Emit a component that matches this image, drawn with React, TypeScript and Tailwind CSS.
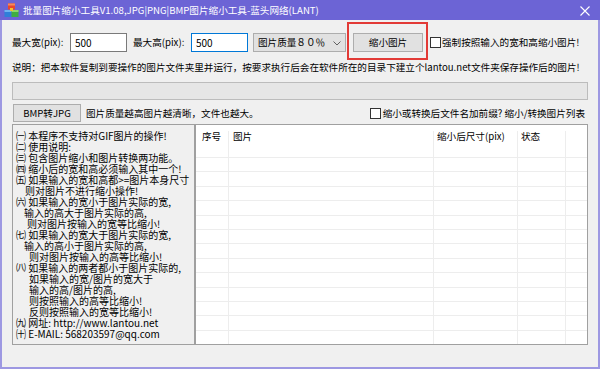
import React from "react";

const lines: [string, number][] = [
  ["㈠ 本程序不支持对GIF图片的操作!", 0],
  ["㈡ 使用说明:", 0],
  ["㈢ 包含图片缩小和图片转换两功能。", 0],
  ["㈣ 缩小后的宽和高必须输入其中一个!", 0],
  ["㈤ 如果输入的宽和高都>=图片本身尺寸", 0],
  ["则对图片不进行缩小操作!", 9],
  ["㈥ 如果输入的宽小于图片实际的宽,", 0],
  ["输入的高大于图片实际的高,", 8],
  ["则对图片按输入的宽等比缩小!", 11],
  ["㈦ 如果输入的宽大于图片实际的宽,", 0],
  ["输入的高小于图片实际的高,", 8],
  ["则对图片按输入的高等比缩小!", 13],
  ["㈧ 如果输入的两者都小于图片实际的,", 0],
  ["如果输入的宽/图片的宽大于", 13],
  ["输入的高/图片的高,", 13],
  ["则按照输入的高等比缩小!", 13],
  ["反则按照输入的宽等比缩小!", 13],
  ["㈨ 网址: http://www.lantou.net", 0],
  ["㈩ E-MAIL: 568203597@qq.com", 0],
];

function Cells({ header }: { header?: boolean }) {
  const base = "h-full border-r border-[#ededed] shrink-0";
  return (
    <>
      <div className={`${base} w-[33px] pl-[6px]`}>{header ? "序号" : ""}</div>
      <div className={`${base} w-[205px] pl-[4px]`}>{header ? "图片" : ""}</div>
      <div className={`${base} w-[84px] pl-[3px]`}>{header ? "缩小后尺寸(pix)" : ""}</div>
      <div className={`${base} w-[48px] pl-[3px]`}>{header ? "状态" : ""}</div>
      <div className="h-full flex-1" />
    </>
  );
}

export default function App() {
  return (
    <div className="w-[600px] h-[369px] flex flex-col overflow-hidden font-['Noto_Sans_CJK_SC',sans-serif] text-[9.6px] leading-[11px] text-black">
      {/* Title bar */}
      <div className="h-[20px] shrink-0 bg-[#6c64d5] flex items-center relative">
        <svg width="15" height="15" viewBox="0 0 15 15" className="ml-[4px]">
          <rect x="4" y="0.5" width="7" height="6" fill="#e8462f" />
          <rect x="4" y="0.5" width="7" height="2" fill="#f58a5a" />
          <rect x="0.5" y="7" width="7" height="7" fill="#2f7fd8" />
          <rect x="0.5" y="7" width="7" height="2" fill="#6fb2f0" />
          <rect x="7.5" y="7" width="7" height="7" fill="#3fae3f" />
          <rect x="7.5" y="7" width="7" height="2" fill="#8fd86a" />
          <rect x="6" y="5" width="3" height="3" fill="#f2c230" />
        </svg>
        <span className="ml-[4px] text-white whitespace-nowrap text-[9.6px]">
          批量图片缩小工具V1.08,JPG|PNG|BMP图片缩小工具-蓝头网络(LANT)
        </span>
        <svg width="10" height="10" viewBox="0 0 10 10" className="absolute right-[10px] top-[6px]">
          <path d="M0.5 0.5 L9.5 9.5 M9.5 0.5 L0.5 9.5" stroke="white" strokeWidth="1.1" />
        </svg>
      </div>

      {/* Body */}
      <div className="flex-1 flex flex-col bg-[#f0f0f0] border-x-2 border-b-2 border-[#9d98e2] pl-[10px] pr-[10px]">
        {/* Row 1 */}
        <div className="mt-[13px] h-[19px] flex items-center whitespace-nowrap">
          <div className="w-[58px]">最大宽(pix):</div>
          <div className="w-[57px] h-[19px] bg-white border border-[#7a7a7a] flex items-center pl-[4px] text-[10px]">500</div>
          <div className="ml-[6px] w-[58px]">最大高(pix):</div>
          <div className="w-[57px] h-[19px] bg-white border border-[#0078d7] flex items-center pl-[4px] text-[10px]">500</div>
          <div className="ml-[5px] w-[93px] h-[19px] bg-[#e1e1e1] border border-[#adadad] flex items-center pl-[4px] relative">
            <span>图片质量８０％</span>
            <svg width="8" height="5" viewBox="0 0 8 5" className="absolute right-[4px] top-[7px]">
              <path d="M0.5 0.5 L4 4 L7.5 0.5" stroke="#606060" fill="none" strokeWidth="1" />
            </svg>
          </div>
          <div className="ml-[7px] w-[70px] h-[19px] relative">
            <div className="w-full h-full bg-[#e1e1e1] border border-[#adadad] flex items-center justify-center">缩小图片</div>
            <div className="absolute left-[-6px] right-[-5px] top-[-11px] bottom-[-8px] border-2 border-[#e23a36]" />
          </div>
          <div className="ml-[7px] w-[11px] h-[11px] bg-white border border-[#333333]" />
          <div className="ml-[1px]">强制按照输入的宽和高缩小图片!</div>
        </div>

        {/* Row 2 */}
        <div className="mt-[9px] h-[12px] flex items-center whitespace-nowrap">
          说明：把本软件复制到要操作的图片文件夹里并运行，按要求执行后会在软件所在的目录下建立个lantou.net文件夹保存操作后的图片!
        </div>

        {/* Row 3 progress */}
        <div className="mt-[9px] h-[18px] bg-[#e6e6e6] border border-[#bcbcbc]" />

        {/* Row 4 */}
        <div className="mt-[4px] h-[18px] flex items-center whitespace-nowrap">
          <div className="ml-[1px] w-[68px] h-[18px] bg-[#e1e1e1] border border-[#adadad] flex items-center justify-center">BMP转JPG</div>
          <div className="ml-[5px]">图片质量越高图片越清晰，文件也越大。</div>
          <div className="ml-auto mr-[3px] flex items-center">
            <div className="w-[11px] h-[11px] bg-white border border-[#333333]" />
            <div className="ml-[2px]">缩小或转换后文件名加前缀? 缩小/转换图片列表</div>
          </div>
        </div>

        {/* Row 5 */}
        <div className="mt-[2px] h-[221px] flex">
          <div className="w-[183px] h-full border border-[#a0a0a0] pl-[3px] pt-[5px] overflow-hidden whitespace-nowrap text-[10px]">
            {lines.map(([t, ind], i) => (
              <div key={i} className="h-[11px] leading-[11px]" style={{ paddingLeft: ind }}>
                {t}
              </div>
            ))}
          </div>
          <div className="flex-1 h-full bg-white border border-[#a0a0a0] overflow-hidden flex flex-col whitespace-nowrap">
            <div className="h-[33px] shrink-0 flex border-b border-[#ededed] pt-[6px]">
              <Cells header />
            </div>
            {Array.from({ length: 13 }).map((_, i) => (
              <div key={i} className="h-[14.4px] shrink-0 flex border-b border-[#ededed]">
                <Cells />
              </div>
            ))}
          </div>
        </div>
      </div>
    </div>
  );
}
